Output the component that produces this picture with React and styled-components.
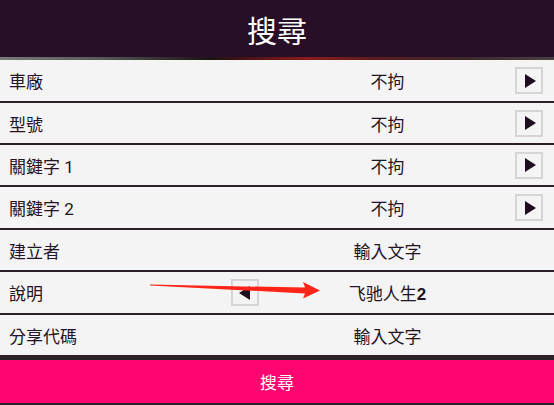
import React from "react";
import styled, { createGlobalStyle } from "styled-components";

const Global = createGlobalStyle`
  html, body { margin: 0; padding: 0; background: #f4f4f4; }
  body { font-family: Roboto, "Noto Sans CJK TC", sans-serif; }
  * { box-sizing: border-box; }
`;

const Page = styled.div`
  position: relative;
  width: 554px;
  height: 405px;
  display: flex;
  flex-direction: column;
  background: #f4f4f4;
  overflow: hidden;
`;

const Header = styled.header`
  height: 57px;
  background: #271027;
  display: flex;
  align-items: center;
  justify-content: center;
  color: #fff;
  font-size: 30px;
  font-weight: 400;
  padding-top: 1px;
`;

const HeaderLine = styled.div`
  height: 3px;
  background: linear-gradient(
    to right,
    #7a7a7a 0%,
    #5a5a5a 18%,
    #1a1212 38%,
    #6e1616 50%,
    #8a1c1c 56%,
    #5a1c1c 68%,
    #3e2a2c 85%,
    #4a4040 100%
  );
`;

const List = styled.div`
  display: flex;
  flex-direction: column;
`;

const Row = styled.div`
  height: ${(p) => (p.$tall ? 43 : 42)}px;
  display: grid;
  grid-template-columns: 277px 223px 54px;
  align-items: center;
  border-bottom: 2px solid #2c1f2a;
  background: #f4f4f4;
  color: #231323;
  font-size: 17px;
`;

const Label = styled.div`
  padding-left: 9px;
  display: flex;
  align-items: center;
  justify-content: space-between;
  padding-right: 18px;
  white-space: nowrap;
`;

const Value = styled.div`
  text-align: center;
  white-space: nowrap;
  padding-right: 2px;
`;

const Bold = styled.span`
  font-family: "Liberation Sans", Arial, sans-serif;
  font-weight: 700;
`;

const ArrowBtn = styled.div`
  width: 28px;
  height: 27px;
  border: 2px solid #d6d4d6;
  background: #f4f4f4;
  display: flex;
  align-items: center;
  justify-content: center;
  margin-left: ${(p) => (p.$left ? "0" : "15px")};
`;

const Tri = styled.span`
  width: 0;
  height: 0;
  border-top: 7.5px solid transparent;
  border-bottom: 7.5px solid transparent;
  ${(p) =>
    p.$dir === "left"
      ? "border-right: 11px solid #1e0d1e; margin-right: 1px;"
      : "border-left: 11px solid #1e0d1e; margin-left: 2px;"}
`;

const DarkBar = styled.div`
  height: 3px;
  background: #2a2328;
`;

const SearchButton = styled.button`
  height: 45px;
  border: none;
  border-bottom: 2px solid #2a2328;
  background: #ff0571;
  color: #fff;
  font-family: Roboto, "Noto Sans CJK TC", sans-serif;
  font-size: 17px;
  display: flex;
  align-items: center;
  justify-content: center;
  padding: 0;
`;

const Annotation = styled.svg`
  position: absolute;
  left: 0;
  top: 0;
  width: 554px;
  height: 405px;
  pointer-events: none;
`;

const rows = [
  { label: "車廠", value: "不拘", btn: true, tall: true },
  { label: "型號", value: "不拘", btn: true },
  { label: "關鍵字 1", value: "不拘", btn: true },
  { label: "關鍵字 2", value: "不拘", btn: true, tall: true },
  { label: "建立者", value: "輸入文字" },
  { label: "說明", value: "desc", leftBtn: true, tall: true },
  { label: "分享代碼", value: "輸入文字" },
];

export default function App() {
  return (
    <Page>
      <Global />
      <Header>搜尋</Header>
      <HeaderLine />
      <List>
        {rows.map((r) => (
          <Row key={r.label} $tall={r.tall}>
            <Label>
              <span>{r.label}</span>
              {r.leftBtn && (
                <ArrowBtn $left>
                  <Tri $dir="left" />
                </ArrowBtn>
              )}
            </Label>
            <Value>
              {r.value === "desc" ? (
                <>
                  飞驰人生<Bold>2</Bold>
                </>
              ) : (
                r.value
              )}
            </Value>
            <div>
              {r.btn && (
                <ArrowBtn>
                  <Tri $dir="right" />
                </ArrowBtn>
              )}
            </div>
          </Row>
        ))}
      </List>
      <DarkBar />
      <SearchButton>搜尋</SearchButton>
      <Annotation viewBox="0 0 554 405">
        <polygon
          points="150,284.6 305,287.6 303,282 320,290.6 303,298.6 305,293.4 150,285.6"
          fill="#ff2418"
        />
      </Annotation>
    </Page>
  );
}
